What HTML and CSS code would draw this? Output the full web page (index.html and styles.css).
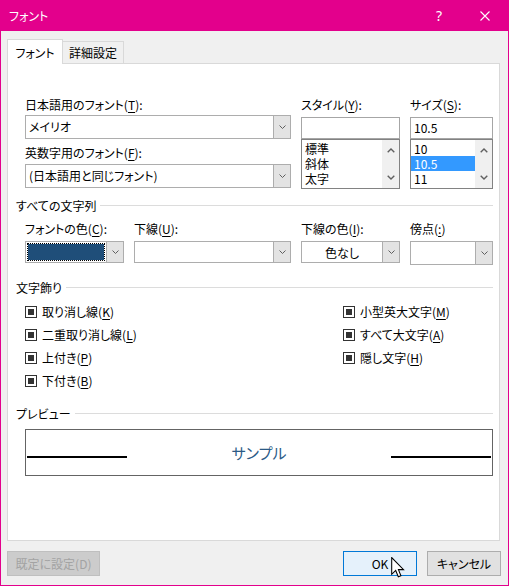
FILE: index.html
```html
<!DOCTYPE html>
<html lang="ja">
<head>
<meta charset="utf-8">
<title>フォント</title>
<link rel="stylesheet" href="styles.css">
</head>
<body>
<div class="window">
  <div class="titlebar">
    <div class="title">フォント</div>
    <div class="tbtn help">?</div>
    <div class="tbtn close">
      <svg width="10" height="10" viewBox="0 0 10 10"><path d="M0.5 0.5 L9.5 9.5 M9.5 0.5 L0.5 9.5" stroke="#fff" stroke-width="1.1" fill="none"/></svg>
    </div>
  </div>
  <div class="content">
    <div class="tabs">
      <div class="tab active">フォント</div>
      <div class="tab inactive">詳細設定</div>
    </div>
    <div class="panel">
      <div class="fontgrid">
        <div class="col">
          <div class="label">日本語用のフォント(<u>T</u>):</div>
          <div class="combo mt2"><div class="val">メイリオ</div><div class="cbtn"><svg width="7" height="4" viewBox="0 0 7 4"><polyline points="0.5,0.5 3.5,3.5 6.5,0.5" fill="none" stroke="#5f5f5f"/></svg></div></div>
          <div class="label mt5">英数字用のフォント(<u>F</u>):</div>
          <div class="combo mt3"><div class="val">(日本語用と同じフォント)</div><div class="cbtn"><svg width="7" height="4" viewBox="0 0 7 4"><polyline points="0.5,0.5 3.5,3.5 6.5,0.5" fill="none" stroke="#5f5f5f"/></svg></div></div>
        </div>
        <div class="col">
          <div class="label">スタイル(<u>Y</u>):</div>
          <div class="input mt4"></div>
          <div class="list">
            <div class="items">
              <div class="item">標準</div>
              <div class="item">斜体</div>
              <div class="item">太字</div>
            </div>
            <div class="sb">
              <svg width="8" height="5" viewBox="0 0 8 5"><polyline points="0.7,4.3 4,1 7.3,4.3" fill="none" stroke="#606060" stroke-width="1.4"/></svg>
              <svg width="8" height="5" viewBox="0 0 8 5"><polyline points="0.7,0.7 4,4 7.3,0.7" fill="none" stroke="#606060" stroke-width="1.4"/></svg>
            </div>
          </div>
        </div>
        <div class="col">
          <div class="label">サイズ(<u>S</u>):</div>
          <div class="input mt4"><span class="ival">10.5</span></div>
          <div class="list">
            <div class="items">
              <div class="item">10</div>
              <div class="item sel">10.5</div>
              <div class="item">11</div>
            </div>
            <div class="sb">
              <svg width="8" height="5" viewBox="0 0 8 5"><polyline points="0.7,4.3 4,1 7.3,4.3" fill="none" stroke="#606060" stroke-width="1.4"/></svg>
              <svg width="8" height="5" viewBox="0 0 8 5"><polyline points="0.7,0.7 4,4 7.3,0.7" fill="none" stroke="#606060" stroke-width="1.4"/></svg>
            </div>
          </div>
        </div>
      </div>

      <div class="sec s1">すべての文字列</div>
      <div class="colorgrid">
        <div class="col">
          <div class="label">フォントの色(<u>C</u>):</div>
          <div class="combo small mt4"><div class="swatch"></div><div class="cbtn"><svg width="7" height="4" viewBox="0 0 7 4"><polyline points="0.5,0.5 3.5,3.5 6.5,0.5" fill="none" stroke="#5f5f5f"/></svg></div></div>
        </div>
        <div class="col">
          <div class="label">下線(<u>U</u>):</div>
          <div class="combo small mt4"><div class="val"></div><div class="cbtn"><svg width="7" height="4" viewBox="0 0 7 4"><polyline points="0.5,0.5 3.5,3.5 6.5,0.5" fill="none" stroke="#5f5f5f"/></svg></div></div>
        </div>
        <div class="col">
          <div class="label">下線の色(<u>I</u>):</div>
          <div class="combo small mt4"><div class="val center">色なし</div><div class="cbtn"><svg width="7" height="4" viewBox="0 0 7 4"><polyline points="0.5,0.5 3.5,3.5 6.5,0.5" fill="none" stroke="#5f5f5f"/></svg></div></div>
        </div>
        <div class="col">
          <div class="label">傍点(<u>:</u>)</div>
          <div class="combo mt4"><div class="val"></div><div class="cbtn"><svg width="7" height="4" viewBox="0 0 7 4"><polyline points="0.5,0.5 3.5,3.5 6.5,0.5" fill="none" stroke="#5f5f5f"/></svg></div></div>
        </div>
      </div>

      <div class="sec s2">文字飾り</div>
      <div class="checks">
        <div class="check"><span class="box"></span><span>取り消し線(<u>K</u>)</span></div>
        <div class="check"><span class="box"></span><span>小型英大文字(<u>M</u>)</span></div>
        <div class="check"><span class="box"></span><span>二重取り消し線(<u>L</u>)</span></div>
        <div class="check"><span class="box"></span><span>すべて大文字(<u>A</u>)</span></div>
        <div class="check"><span class="box"></span><span>上付き(<u>P</u>)</span></div>
        <div class="check"><span class="box"></span><span>隠し文字(<u>H</u>)</span></div>
        <div class="check"><span class="box"></span><span>下付き(<u>B</u>)</span></div>
      </div>

      <div class="sec s3">プレビュー</div>
      <div class="preview">
        <div class="pline"></div>
        <div class="sample">サンプル</div>
        <div class="pline"></div>
      </div>
    </div>
    <div class="footer">
      <div class="b disabled wide">既定に設定(D)</div>
      <div class="right">
        <div class="b ok">OK</div>
        <div class="b">キャンセル</div>
      </div>
    </div>
  </div>
  <svg class="cursor" width="14" height="21" viewBox="0 0 13 20"><path d="M0.5 0.5 L0.5 16.5 L4.3 12.8 L6.8 18.8 L9.3 17.8 L6.9 12 L11.8 12 Z" fill="#fff" stroke="#000" stroke-width="1" stroke-linejoin="miter"/></svg>
</div>
</body>
</html>
```
FILE: styles.css
```css
* { box-sizing: border-box; }
html, body { margin: 0; padding: 0; }
body {
  width: 509px;
  height: 586px;
  overflow: hidden;
  font-family: "Noto Sans CJK JP", "Noto Sans", sans-serif;
  font-size: 12px;
  font-feature-settings: "palt";
  color: #000;
  background: #f0f0f0;
}
u { text-decoration-thickness: 1px; text-underline-offset: 2px; }
.window {
  position: relative;
  width: 509px;
  height: 586px;
  border: 1px solid #e3008c;
  border-top: 0;
  display: flex;
  flex-direction: column;
  background: #f0f0f0;
}
.titlebar {
  height: 31px;
  flex: none;
  background: #e3008c;
  color: #fff;
  display: flex;
  align-items: center;
  padding-left: 8px;
}
.title { flex: 1; line-height: 17px; }
.tbtn {
  width: 46px;
  height: 31px;
  display: flex;
  align-items: center;
  justify-content: center;
}
.help { font-family: "Noto Sans", sans-serif; font-size: 14px; }
.content {
  flex: 1;
  padding: 8px 8px 0 6px;
  display: flex;
  flex-direction: column;
}
.tabs { display: flex; align-items: flex-end; height: 24px; }
.tab {
  height: 22px;
  border: 1px solid #d9d9d9;
  border-bottom: 0;
  display: flex;
  align-items: center;
  justify-content: center;
  line-height: 17px;
}
.tab.active {
  width: 56px;
  height: 25px;
  background: #fff;
  position: relative;
  z-index: 1;
  margin-bottom: -1px;
  padding-top: 1px;
}
.tab.inactive {
  width: 61px;
  border-left: 0;
  background: #f0f0f0;
}
.panel {
  height: 478px;
  flex: none;
  background: #fff;
  border: 1px solid #d9d9d9;
  padding: 32px 6px 0 8px;
}
.fontgrid {
  display: grid;
  grid-template-columns: 266px 99px 83px;
  column-gap: 10px;
  margin-left: 9px;
}
.colorgrid {
  display: grid;
  grid-template-columns: 99px 157px 99px 83px;
  column-gap: 10px;
  margin-left: 9px;
  margin-top: 6px;
}
.col { display: flex; flex-direction: column; }
.label { height: 17px; line-height: 17px; white-space: nowrap; }
.mt2 { margin-top: 2px; }
.mt3 { margin-top: 3px; }
.mt4 { margin-top: 4px; }
.mt5 { margin-top: 5px; }
.combo {
  height: 24px;
  border: 1px solid #adadad;
  background: #fff;
  display: flex;
}
.combo.small { height: 22px; }
.combo .val {
  flex: 1;
  padding-left: 3px;
  line-height: 21px;
  white-space: nowrap;
  overflow: hidden;
}
.combo .val.center { text-align: center; padding-left: 0; }
.cbtn {
  width: 17px;
  flex: none;
  background: #e3e3e3;
  border-left: 1px solid #adadad;
  display: flex;
  align-items: center;
  justify-content: center;
}
.swatch {
  flex: 1;
  margin: 1px;
  border: 1px dotted #000;
  background: #1f4e79;
  background-clip: padding-box;
}
.input {
  height: 22px;
  border: 1px solid #a6a6a6;
  background: #fff;
  padding-left: 3px;
  line-height: 19px;
}
.list {
  height: 50px;
  border: 1px solid #828282;
  display: flex;
  background: #fff;
}
.items { flex: 1; padding-top: 1px; }
.item { height: 15px; line-height: 15px; padding-left: 3px; overflow: hidden; }
.item.sel { background: #3399ff; color: #fff; }
.sb {
  width: 17px;
  flex: none;
  background: #f0f0f0;
  display: flex;
  flex-direction: column;
  align-items: center;
  justify-content: space-between;
  padding: 8px 0 8px;
}
.sec {
  display: flex;
  align-items: center;
  height: 17px;
  line-height: 17px;
  white-space: nowrap;
}
.sec::after {
  content: "";
  flex: 1;
  height: 1px;
  background: #dcdcdc;
  margin-left: 4px;
}
.s1 { margin-top: 8px; }
.s2 { margin-top: 14px; }
.s3 { margin-top: 13px; }
.checks {
  display: grid;
  grid-template-columns: 318px auto;
  grid-auto-rows: 23px;
  margin-left: 9px;
  margin-top: 4px;
}
.check { display: flex; align-items: center; gap: 5px; white-space: nowrap; }
.box {
  width: 12px;
  height: 12px;
  border: 1px solid #333;
  padding: 2px;
  flex: none;
}
.box::after {
  content: "";
  display: block;
  width: 6px;
  height: 6px;
  background: #333;
}
.preview {
  margin-left: 9px;
  margin-top: 7px;
  height: 47px;
  border: 1px solid #646464;
  display: flex;
  align-items: center;
  padding: 0 1px;
}
.pline { width: 100px; height: 2px; background: #000; margin-top: 9px; flex: none; }
.sample {
  flex: 1;
  text-align: center;
  font-size: 15px;
  color: #2b5a86;
  line-height: 20px;
}
.footer {
  display: flex;
  justify-content: space-between;
  margin-top: 10px;
  margin-right: -1px;
  height: 25px;
}
.right { display: flex; gap: 10px; }
.b {
  width: 74px;
  height: 25px;
  border: 1px solid #adadad;
  background: #e1e1e1;
  display: flex;
  align-items: center;
  justify-content: center;
  line-height: 17px;
}
.b.wide { width: 93px; }
.b.ok { background: #e5f1fb; border-color: #0078d7; }
.b.disabled { background: #cccccc; border-color: #bfbfbf; color: #a3a3a3; }
.cursor { position: absolute; left: 390px; top: 557px; }
```
